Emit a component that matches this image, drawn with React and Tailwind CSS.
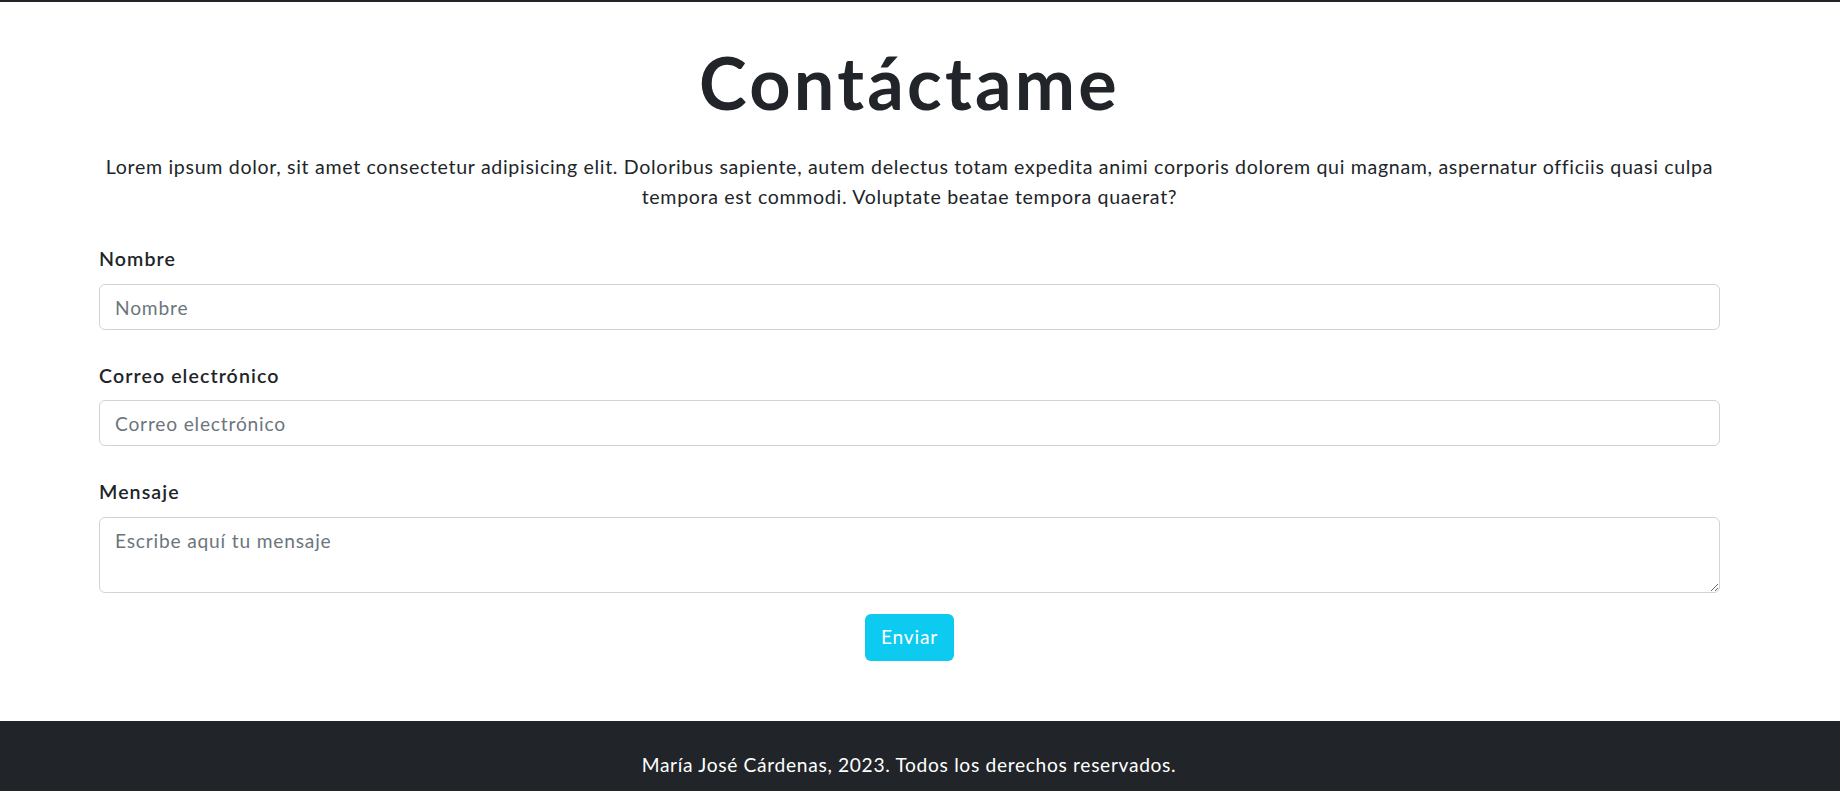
import React from "react";

export default function App() {
  return (
    <div className="min-h-screen bg-white text-[#212529] font-['Lato','Open_Sans',sans-serif] tracking-[0.042em]">
      <div className="h-[2px] bg-[#212529]" />

      <main className="ml-[99px] w-[1621px]">
        <h1 className="mt-[37px] text-center text-[72px] leading-[1.2] font-bold tracking-[0.045em]">
          Contáctame
        </h1>

        <p className="mt-[27px] text-center text-[19.6px] leading-[30px]">
          Lorem ipsum dolor, sit amet consectetur adipisicing elit. Doloribus sapiente, autem delectus totam expedita animi corporis dolorem qui magnam, aspernatur officiis quasi culpa tempora est commodi. Voluptate beatae tempora quaerat?
        </p>

        <form className="mt-[32px]" onSubmit={(e) => e.preventDefault()}>
          <div>
            <label htmlFor="nombre" className="block mb-[11px] text-[19.6px] leading-[29px] font-semibold tracking-[0.055em]">
              Nombre
            </label>
            <input
              id="nombre"
              type="text"
              placeholder="Nombre"
              className="block w-full h-[46px] px-[15px] text-[19.2px] tracking-[0.042em] border border-[#ced4da] rounded-[6px] outline-none placeholder:text-[#6c757d]"
            />
          </div>

          <div className="mt-[31px]">
            <label htmlFor="correo" className="block mb-[10px] text-[19.6px] leading-[29px] font-semibold tracking-[0.055em]">
              Correo electrónico
            </label>
            <input
              id="correo"
              type="email"
              placeholder="Correo electrónico"
              className="block w-full h-[46px] px-[15px] text-[19.2px] tracking-[0.042em] border border-[#ced4da] rounded-[6px] outline-none placeholder:text-[#6c757d]"
            />
          </div>

          <div className="mt-[31px]">
            <label htmlFor="mensaje" className="block mb-[11px] text-[19.6px] leading-[29px] font-semibold tracking-[0.055em]">
              Mensaje
            </label>
            <textarea
              id="mensaje"
              placeholder="Escribe aquí tu mensaje"
              className="block w-full h-[76px] px-[15px] pt-[8px] text-[19.2px] leading-[29px] tracking-[0.042em] border border-[#ced4da] rounded-[6px] outline-none resize-y placeholder:text-[#6c757d]"
            />
          </div>

          <div className="mt-[21px] flex justify-center">
            <button
              type="submit"
              className="h-[47px] w-[89px] rounded-[6px] bg-[#0dcaf0] text-white text-[19.2px] tracking-[0.042em]"
            >
              Enviar
            </button>
          </div>
        </form>
      </main>

      <footer className="mt-[60px] bg-[#212529] pt-[29px] pb-[30px]">
        <p className="text-center text-white text-[19.2px] leading-[29px] pr-[22px]">
          María José Cárdenas, 2023. Todos los derechos reservados.
        </p>
      </footer>
    </div>
  );
}
